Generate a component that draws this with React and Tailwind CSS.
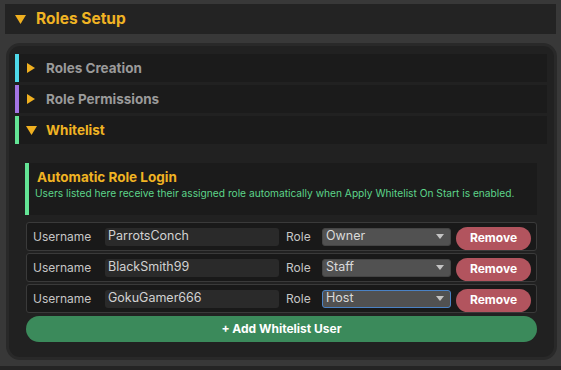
const users = [
  { name: 'ParrotsConch', role: 'Owner', focused: false },
  { name: 'BlackSmith99', role: 'Staff', focused: false },
  { name: 'GokuGamer666', role: 'Host', focused: true },
];

function Tri({ open, color }) {
  return open ? (
    <svg width="11" height="9" viewBox="0 0 11 9" className="shrink-0">
      <polygon points="0,0 11,0 5.5,9" fill={color} />
    </svg>
  ) : (
    <svg width="8" height="10" viewBox="0 0 8 10" className="shrink-0">
      <polygon points="0,0 8,5 0,10" fill={color} />
    </svg>
  );
}

function Section({ bar, title, open }) {
  return (
    <div className="flex h-[28px] bg-[#1b1b1b]">
      <div className={`w-[4px] ${bar}`} />
      <div className={`flex items-center ${open ? 'pl-[7px] gap-[9px]' : 'pl-[8px] gap-[11px]'}`}>
        <Tri open={open} color="#f0b020" />
        <span
          className={`text-[13.5px] font-bold ${open ? 'text-[#f0b323]' : 'text-[#9a9a9a]'}`}
        >
          {title}
        </span>
      </div>
    </div>
  );
}

function UserRow({ user }) {
  return (
    <div className="flex items-center h-[29px] bg-[#191919] border border-[#3a3a3a] rounded-[3px] pl-[6px] pr-[5px]">
      <span className="w-[72px] text-[12px] text-[#c6c6c6]">Username</span>
      <div className="w-[174px] h-[18px] bg-[#2a2a2a] rounded-[3px] flex items-center pl-[3px] text-[12.5px] text-[#d2d2d2]">
        {user.name}
      </div>
      <span className="ml-[7px] w-[36px] text-[12px] text-[#c6c6c6]">Role</span>
      <div
        className={`w-[129px] h-[18px] bg-[#515151] rounded-[3px] flex items-center justify-between pl-[3px] pr-[6px] text-[12.5px] text-[#dadada] border ${
          user.focused ? 'border-[#4b82c4]' : 'border-[#444]'
        }`}
      >
        <span>{user.role}</span>
        <svg width="8" height="5" viewBox="0 0 8 5">
          <polygon points="0,0 8,0 4,5" fill="#c4c4c4" />
        </svg>
      </div>
      <button className="ml-[5px] mt-[3px] w-[75px] h-[23px] rounded-full bg-[#b2545e] text-white text-[12px] font-bold">
        Remove
      </button>
    </div>
  );
}

export default function App() {
  return (
    <div
      className="w-[561px] h-[370px] bg-[#383838] overflow-hidden flex flex-col"
      style={{ fontFamily: 'Inter, "Noto Sans", sans-serif' }}
    >
      <div className="mt-[4px] mx-[5px] h-[30px] bg-[#232323] flex items-center pl-[10px] gap-[10px]">
        <Tri open color="#f0b020" />
        <span className="text-[15.5px] font-bold text-[#f0b323]">Roles Setup</span>
      </div>

      <div className="mt-[9px] ml-[6px] w-[551px] h-[317px] rounded-[14px] bg-[#212121] border-[3px] border-[#292929] pt-[8px] pl-[6px] pr-[7px]">
        <div className="flex flex-col gap-[3px]">
          <Section bar="bg-[#4ed9ea]" title="Roles Creation" />
          <Section bar="bg-[#a374e4]" title="Role Permissions" />
          <Section bar="bg-[#63e495]" title="Whitelist" open />
        </div>

        <div className="pt-[19px] pl-[10px] pr-[10px]">
          <div className="flex h-[52px] bg-[#1b1b1b]">
            <div className="w-[4px] bg-[#63e495]" />
            <div className="flex flex-col pl-[8px] pt-[6px]">
              <span className="text-[13.5px] font-bold text-[#f0b323] leading-[17px]">
                Automatic Role Login
              </span>
              <span className="text-[10.2px] text-[#5dd58a] leading-[14px] -ml-[2px]">
                Users listed here receive their assigned role automatically when Apply Whitelist On Start is enabled.
              </span>
            </div>
          </div>

          <div className="mt-[7px] ml-[1px] flex flex-col gap-[2px]">
            {users.map((u, i) => (
              <UserRow key={i} user={u} />
            ))}
          </div>

          <button className="mt-[3px] ml-[1px] w-[511px] h-[26px] rounded-full bg-[#3b8a5b] text-white text-[12px] font-bold">
            + Add Whitelist User
          </button>
        </div>
      </div>

      <div className="mt-[6px] h-[4px] bg-[#242424]" />
    </div>
  );
}
